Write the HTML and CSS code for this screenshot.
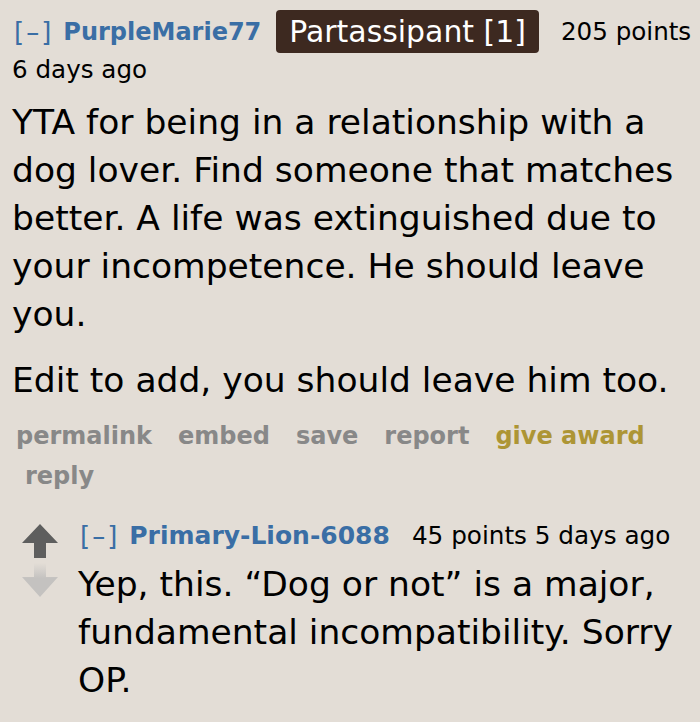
FILE: index.html
```html
<!DOCTYPE html>
<html lang="en">
<head>
<meta charset="utf-8">
<title>Comment</title>
<link rel="stylesheet" href="styles.css">
</head>
<body>
<div class="comment">
  <div class="tagline">
    <a class="expand">[–]</a>
    <a class="author">PurpleMarie77</a>
    <span class="flair">Partassipant [1]</span>
    <span class="score">205 points</span>
    <time class="age">6 days ago</time>
  </div>
  <div class="md">
    <p>YTA for being in a relationship with a dog lover. Find someone that matches better. A life was extinguished due to your incompetence. He should leave you.</p>
    <p>Edit to add, you should leave him too.</p>
  </div>
  <ul class="buttons">
    <li>permalink</li>
    <li>embed</li>
    <li>save</li>
    <li>report</li>
    <li class="award">give award</li>
    <li>reply</li>
  </ul>
  <div class="child">
    <div class="votes">
      <svg class="arrow" width="36" height="34" viewBox="0 0 36 34"><polygon points="18,0 36,19 24,19 24,34 12,34 12,19 0,19" fill="#5e5e5e"/></svg>
      <svg class="arrow" width="36" height="34" viewBox="0 0 36 34">
        <defs><linearGradient id="fade" x1="0" y1="0" x2="0" y2="1"><stop offset="0" stop-color="#c4c2c0" stop-opacity="0"/><stop offset="0.45" stop-color="#c4c2c0" stop-opacity="1"/></linearGradient></defs>
        <polygon points="12,0 24,0 24,14 36,14 18,34 0,14 12,14" fill="url(#fade)"/>
      </svg>
    </div>
    <div class="entry">
      <div class="tagline small">
        <a class="expand">[–]</a>
        <a class="author">Primary-Lion-6088</a>
        <span class="score">45 points 5 days ago</span>
      </div>
      <div class="md">
        <p>Yep, this. “Dog or not” is a major, fundamental incompatibility. Sorry OP.</p>
      </div>
    </div>
  </div>
</div>
</body>
</html>
```
FILE: styles.css
```css
html, body {
  margin: 0;
  padding: 0;
  background: #e3ddd6;
}
body {
  font-family: "DejaVu Sans", Verdana, sans-serif;
  color: #000;
  width: 700px;
  height: 722px;
  overflow: hidden;
}
.comment {
  padding: 10px 0 0 12px;
}
.tagline {
  display: flex;
  flex-wrap: wrap;
  align-items: center;
  row-gap: 3px;
  font-size: 24.6px;
  line-height: 28px;
}
.expand {
  color: #3a6ea5;
  font-size: 26px;
  letter-spacing: 2px;
  margin-left: 2px;
  margin-right: 10px;
}
.author {
  color: #3a6ea5;
  font-weight: bold;
  font-size: 24px;
  margin-right: 15px;
}
.flair {
  background: #3d2920;
  color: #fff;
  font-size: 29.9px;
  line-height: 43px;
  height: 43px;
  padding: 0 13px;
  border-radius: 4px;
  margin-right: 22px;
}
.score {
  color: #000;
}
.age {
  width: 100%;
}
.md {
  font-size: 34.5px;
  line-height: 48px;
  margin-top: 14px;
}
.md p {
  margin: 0 0 18px 0;
}
.md p:last-child {
  margin-bottom: 0;
}
.buttons {
  list-style: none;
  margin: 12px 0 0 0;
  padding: 0 0 0 4px;
  display: flex;
  flex-wrap: wrap;
  font-size: 24px;
  line-height: 40px;
  font-weight: bold;
  color: #888;
}
.buttons li {
  padding: 0 17px 0 9px;
}
.buttons li:first-child {
  padding-left: 0;
}
.buttons .award {
  color: #ad9535;
}
.child {
  display: flex;
  margin-top: 26px;
  margin-left: 10px;
  gap: 20px;
}
.votes {
  display: flex;
  flex-direction: column;
  gap: 5px;
  padding-top: 2px;
}
.arrow {
  display: block;
}
.entry {
  flex: 1;
}
.small .expand {
  margin-right: 10px;
}
.small .author {
  font-size: 25px;
  margin-right: 22px;
}
.small .score {
  font-size: 24.7px;
}
.entry .md {
  margin-top: 10px;
}
```
